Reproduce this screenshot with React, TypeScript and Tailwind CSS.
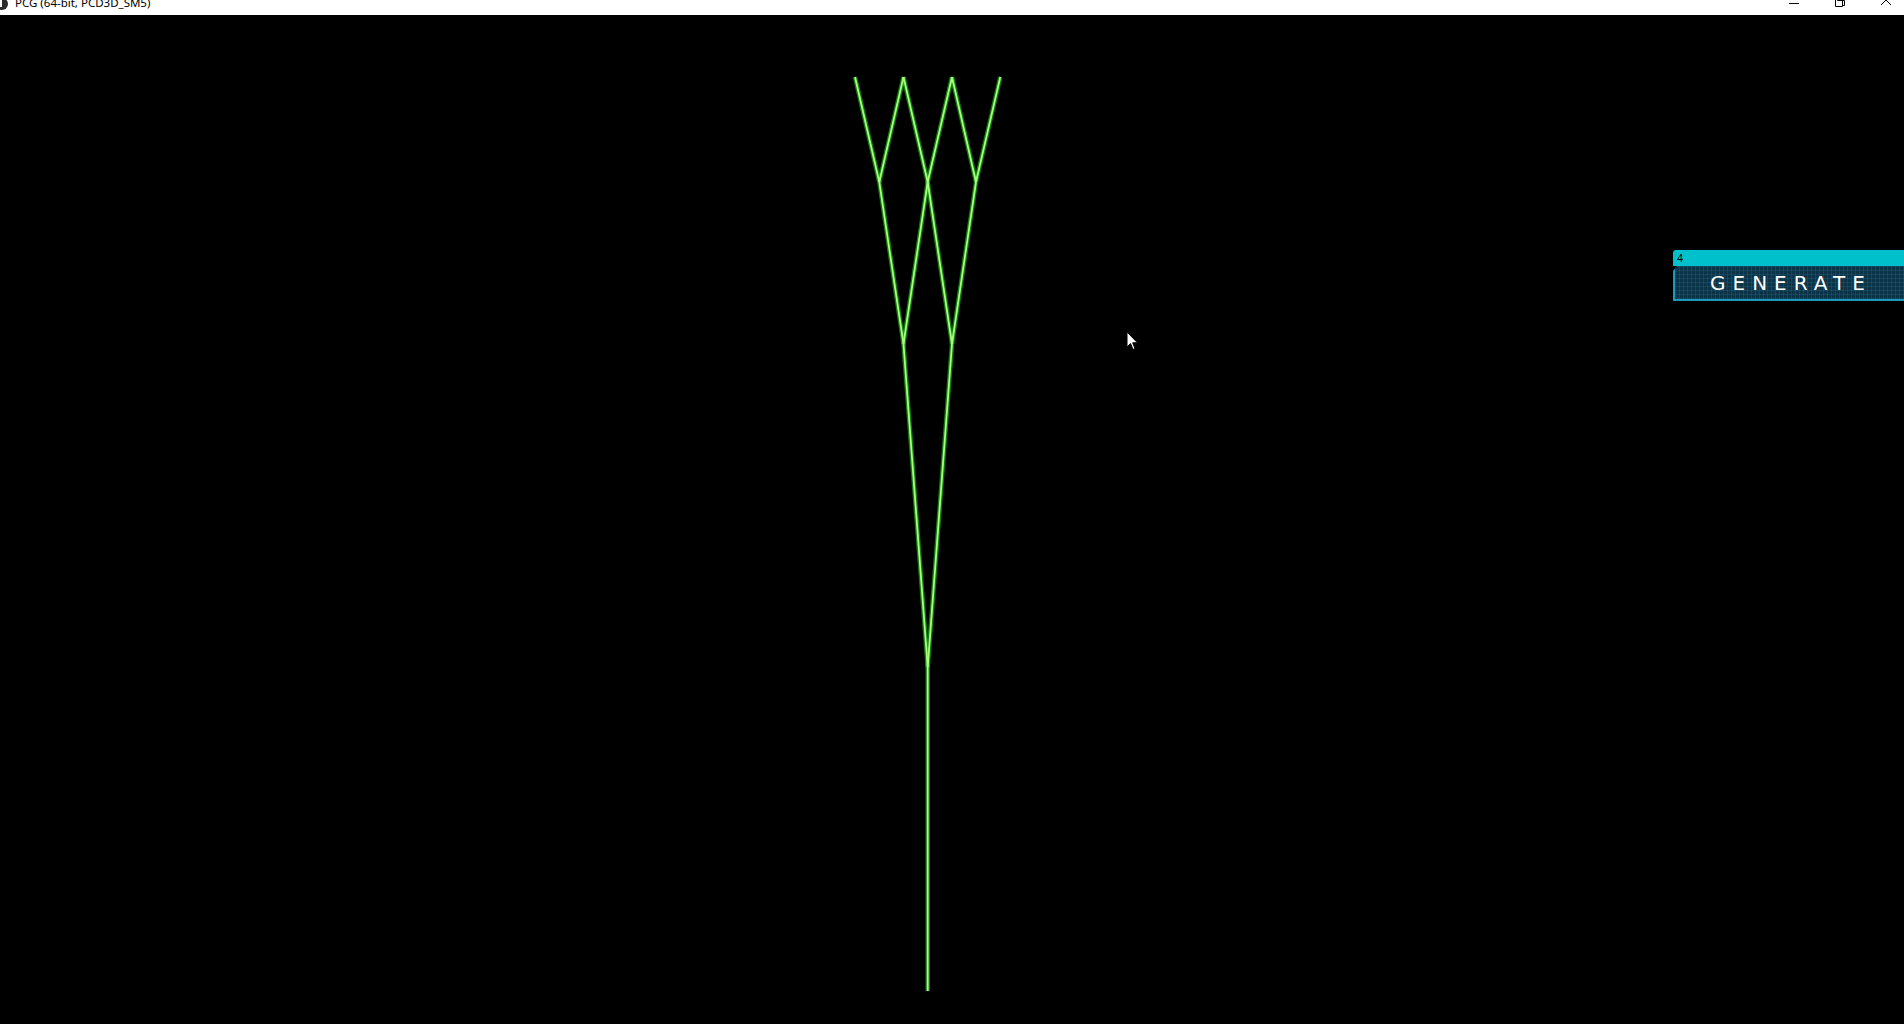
import React from "react";

// branch segments in page coordinates
const segments: [number, number, number, number][] = [
  [927.7, 991, 927.7, 667],
  [927.7, 667, 903.5, 344],
  [927.7, 667, 952, 344],
  [903.5, 344, 879.3, 182],
  [903.5, 344, 927.7, 182],
  [952, 344, 927.7, 182],
  [952, 344, 976, 182],
  [879.3, 182, 855, 77],
  [879.3, 182, 903.5, 77],
  [927.7, 182, 903.5, 77],
  [927.7, 182, 952, 77],
  [976, 182, 952, 77],
  [976, 182, 1000.3, 77],
];

const Tree = () => (
  <svg className="absolute inset-0 h-full w-full" viewBox="0 15 1904 1009" preserveAspectRatio="none">
    <g stroke="#22c822" strokeWidth="4.5" strokeOpacity="0.6" strokeLinecap="butt">
      {segments.map((s, i) => (
        <line key={i} x1={s[0]} y1={s[1]} x2={s[2]} y2={s[3]} />
      ))}
    </g>
    <g stroke="#a8ff7c" strokeWidth="1.8" strokeLinecap="butt">
      {segments.map((s, i) => (
        <line key={i} x1={s[0]} y1={s[1]} x2={s[2]} y2={s[3]} />
      ))}
    </g>
  </svg>
);

const TitleBar = () => (
  <div className="relative h-[15px] w-full shrink-0 overflow-hidden bg-white">
    <svg className="absolute left-0 top-[-4px]" width="10" height="16" viewBox="0 0 10 16">
      <circle cx="2" cy="8" r="6" fill="#2b2b2b" />
      <rect x="0" y="4" width="2" height="7" fill="#fff" />
    </svg>
    <div className="absolute left-[15px] top-[-5px] whitespace-nowrap font-['Noto_Sans',sans-serif] text-[11.5px] leading-[16px] text-black">
      PCG (64-bit, PCD3D_SM5)
    </div>
    <div className="absolute right-[-5px] top-0 flex h-[15px] items-start">
      <div className="flex w-[46px] justify-center pt-[3px]">
        <div className="h-px w-[10px] bg-black" />
      </div>
      <div className="flex w-[46px] justify-center">
        <svg width="10" height="7" viewBox="0 0 10 7" fill="none" stroke="#000" strokeWidth="1">
          <path d="M2.5 0 V 0.5 H 9.5 V 5.5 H 7.5" />
          <path d="M0.5 0 V 6.5 H 7.5 V 0" />
        </svg>
      </div>
      <div className="flex w-[46px] justify-center">
        <svg width="12" height="7" viewBox="0 0 12 7" fill="none" stroke="#000" strokeWidth="1">
          <path d="M1 -5 L 11 5 M 11 -5 L 1 5" />
        </svg>
      </div>
    </div>
  </div>
);

const GeneratePanel = () => (
  <div className="absolute left-[1673px] right-0 top-[250px] flex flex-col">
    <div className="flex h-[16px] items-center rounded-tl-[3px] bg-[#00c1cb] pl-[4px] font-['Liberation_Sans',sans-serif] text-[11px] leading-none text-black">
      4
    </div>
    <div className="flex h-[35px] items-center border-b-2 border-l-2 border-[#1c98bd] bg-[#0c3449] bg-[repeating-linear-gradient(0deg,rgba(60,140,180,0.18)_0px,rgba(60,140,180,0.18)_1px,transparent_1px,transparent_4px),repeating-linear-gradient(90deg,rgba(60,140,180,0.18)_0px,rgba(60,140,180,0.18)_1px,transparent_1px,transparent_4px)] pl-[35px] [clip-path:polygon(4px_0,100%_0,100%_100%,0_100%,0_5px)]">
      <span className="font-['DejaVu_Sans',sans-serif] text-[20px] font-normal leading-none tracking-[7px] text-white">
        GENERATE
      </span>
    </div>
  </div>
);

const Cursor = () => (
  <svg className="absolute left-[1126px] top-[331px]" width="13" height="20" viewBox="0 0 13 20">
    <path d="M1 1 V 16 L 4.5 12.5 L 7 18.5 L 9 17.5 L 6.7 11.8 H 11.5 Z" fill="#fff" stroke="#000" strokeWidth="1" />
  </svg>
);

export default function App() {
  return (
    <div className="relative flex h-[1024px] w-[1904px] flex-col overflow-hidden bg-black">
      <TitleBar />
      <div className="relative flex-1">
        <Tree />
      </div>
      <GeneratePanel />
      <Cursor />
    </div>
  );
}
